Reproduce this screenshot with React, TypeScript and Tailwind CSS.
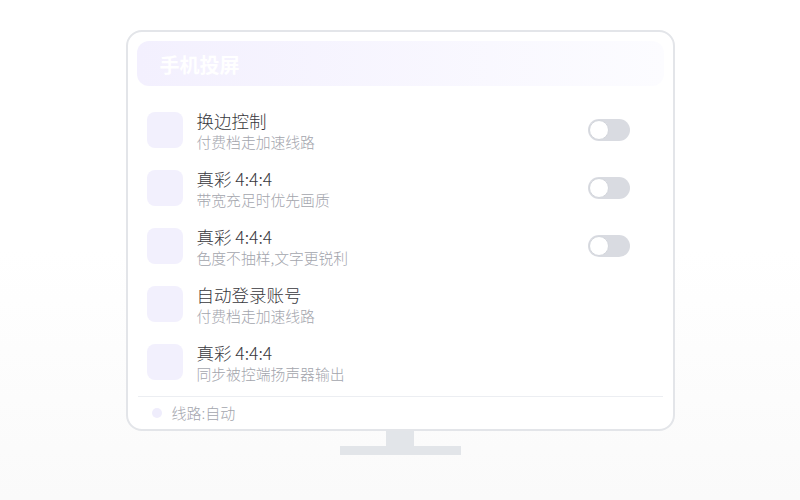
const rows = [
  { title: "换边控制", desc: "付费档走加速线路", toggle: true },
  { title: "真彩 4:4:4", desc: "带宽充足时优先画质", toggle: true },
  { title: "真彩 4:4:4", desc: "色度不抽样,文字更锐利", toggle: true },
  { title: "自动登录账号", desc: "付费档走加速线路", toggle: false },
  { title: "真彩 4:4:4", desc: "同步被控端扬声器输出", toggle: false },
];

function Toggle() {
  return (
    <div className="w-[42px] h-[22px] rounded-full bg-[#d9dbe1] p-[1px] flex items-center">
      <div className="w-[20px] h-[20px] rounded-full bg-white border border-[#d3d6dc]" />
    </div>
  );
}

export default function App() {
  return (
    <div
      className="w-[800px] h-[500px] bg-gradient-to-b from-white via-white to-[#fafafa] flex flex-col items-center pt-[30px]"
      style={{ fontFamily: '"Noto Sans CJK SC", "Noto Sans", sans-serif' }}
    >
      {/* Screen */}
      <div className="w-[549px] h-[401px] rounded-[16px] border-2 border-[#e3e5e9] bg-white flex flex-col pt-[9px] px-[9px]">
        {/* Header */}
        <div className="h-[45px] rounded-[12px] bg-gradient-to-r from-[#f3f0fe] to-[#fcfcff] flex items-center pl-[23px] pt-[2px]">
          <span className="text-white text-[20px] font-bold leading-none">手机投屏</span>
        </div>

        {/* Rows */}
        <div className="mt-[15px] flex flex-col px-[10px]">
          {rows.map((r, i) => (
            <div key={i} className="h-[58px] flex items-center">
              <div className="w-[36px] h-[36px] rounded-[8px] bg-[#f2f0fd] shrink-0" />
              <div className="ml-[14px] flex flex-col flex-1 pt-[2px]">
                <span className="text-[17.5px] leading-[22px] font-light text-[#38383d]">{r.title}</span>
                <span className="text-[14.8px] leading-[20px] font-light text-[#a3a5ad]">{r.desc}</span>
              </div>
              {r.toggle && (
                <div className="mr-[24px]">
                  <Toggle />
                </div>
              )}
            </div>
          ))}
        </div>

        {/* Footer */}
        <div className="mt-[5px] h-px bg-[#eceef2] mx-px" />
        <div className="h-[32px] flex items-center pl-[15px]">
          <div className="w-[10px] h-[10px] rounded-full bg-[#efedfc]" />
          <span className="ml-[10px] text-[15px] font-light text-[#a3a5ad]">线路:自动</span>
        </div>
      </div>

      {/* Stand */}
      <div className="w-[28px] h-[15px] bg-[#e2e5e9]" />
      <div className="w-[121px] h-[9px] bg-[#e2e5e9]" />
    </div>
  );
}
